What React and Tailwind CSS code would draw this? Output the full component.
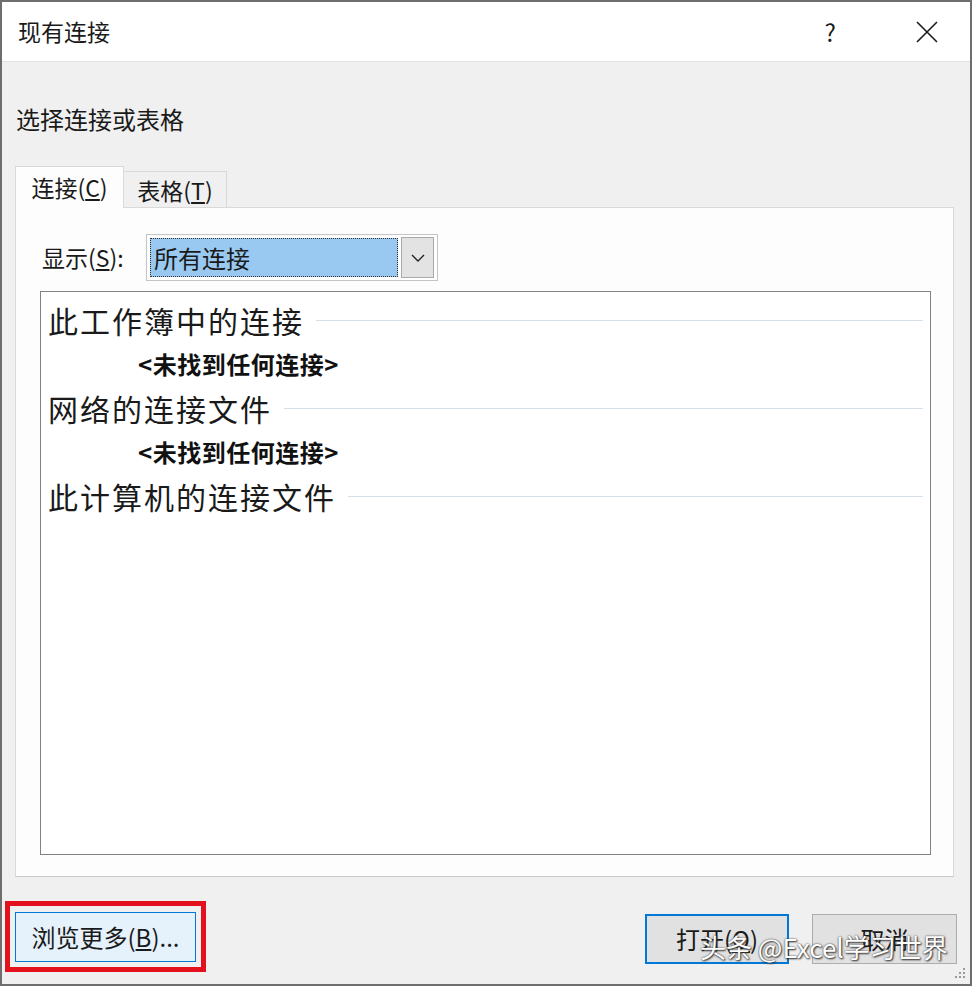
import React from 'react';

const font = { fontFamily: '"Noto Sans CJK SC", "Noto Sans", sans-serif' };

function Heading({ text }) {
  return (
    <div className="flex items-center h-[44px] pl-[7px] pr-[7px]">
      <span className="text-[30px] leading-none tracking-[2px] text-[#1a1a1a] whitespace-nowrap">{text}</span>
      <div className="flex-1 ml-[12px] h-px bg-[#d6dfe8]" />
    </div>
  );
}

function Empty() {
  return (
    <div className="flex items-center h-[44px] pl-[97px]">
      <span className="text-[24px] leading-none font-bold tracking-[0.5px] text-[#111]">&lt;未找到任何连接&gt;</span>
    </div>
  );
}

export default function App() {
  return (
    <div style={font} className="relative w-[972px] h-[986px] flex flex-col border-2 border-[#6e6e6e] bg-[#f0f0f0] text-[#1a1a1a] overflow-hidden">
      {/* title bar */}
      <div className="h-[60px] flex items-center bg-white border-b border-[#e3e3e3] pl-[16px]">
        <span className="text-[23px] leading-none">现有连接</span>
        <span className="ml-auto text-[24px] leading-none mr-[80px]">?</span>
        <svg width="22" height="22" viewBox="0 0 22 22" className="mr-[32px]">
          <path d="M1 1 L21 21 M21 1 L1 21" stroke="#1a1a1a" strokeWidth="1.6" />
        </svg>
      </div>

      {/* body */}
      <div className="flex-1 flex flex-col px-[13px]">
        <div className="mt-[41px] text-[24px] leading-[32px] pl-[1px]">选择连接或表格</div>

        {/* tabs */}
        <div className="mt-[31px] flex items-end">
          <div className="relative z-10 w-[109px] h-[42px] bg-[#fdfdfd] border border-b-0 border-[#d9d9d9] flex items-center justify-center text-[23px] leading-none">
            连接(<span className="underline underline-offset-2">C</span>)
          </div>
          <div className="w-[103px] h-[37px] bg-[#f0f0f0] border border-l-0 border-b-0 border-[#d9d9d9] flex items-center justify-center text-[23px] leading-none">
            表格(<span className="underline underline-offset-2">T</span>)
          </div>
        </div>

        {/* panel */}
        <div className="-mt-px w-[939px] h-[670px] bg-[#fdfdfd] border border-[#d9d9d9] border-b-[#c8c8c8] flex flex-col px-[24px] pt-[26px]">
          <div className="flex items-center h-[47px]">
            <span className="ml-[2px] w-[104px] text-[23px] leading-none">显示(<span className="underline underline-offset-2">S</span>):</span>
            <div className="w-[292px] h-[47px] border border-[#c4c4c4] bg-white flex items-center px-[3px] gap-[3px]">
              <div className="w-[250px] h-[39px] bg-[#99c9f1] border border-dotted border-[#333] flex items-center pl-[3px] text-[24px] leading-none">
                所有连接
              </div>
              <div className="w-[33px] h-[41px] bg-[#e3e3e3] border border-[#a9a9a9] flex items-center justify-center">
                <svg width="14" height="8" viewBox="0 0 14 8">
                  <path d="M1 1 L7 7 L13 1" fill="none" stroke="#222" strokeWidth="1.4" />
                </svg>
              </div>
            </div>
          </div>

          <div className="mt-[10px] w-[891px] h-[564px] bg-white border border-[#828282] pt-[6px]">
            <Heading text="此工作簿中的连接" />
            <Empty />
            <Heading text="网络的连接文件" />
            <Empty />
            <Heading text="此计算机的连接文件" />
          </div>
        </div>
      </div>

      {/* buttons */}
      <div className="h-[104px] flex items-start pl-[3px] pr-[13px]">
        <div className="mt-[21px] border-[5px] border-[#e3101d] p-[5px] pt-[6px]">
          <div className="w-[181px] h-[50px] bg-[#e5f1fb] border border-[#0078d7] flex items-center justify-center text-[24px] leading-none">
            浏览更多(<span className="underline underline-offset-2">B</span>)...
          </div>
        </div>
        <div className="ml-auto mt-[34px] flex gap-[23px]">
          <div className="w-[144px] h-[50px] bg-[#e1e1e1] border-2 border-[#0078d7] flex items-center justify-center text-[24px] leading-none">
            打开(<span className="underline underline-offset-2">O</span>)
          </div>
          <div className="w-[145px] h-[50px] bg-[#e1e1e1] border border-[#adadad] flex items-center justify-center text-[24px] leading-none">
            取消
          </div>
        </div>
      </div>

      {/* watermark */}
      <div className="absolute left-[698px] top-[932px] text-[26px] leading-none text-white whitespace-nowrap [text-shadow:0_0_2px_#333,1px_1px_2px_#333]">
        头条 @Excel学习世界
      </div>

      {/* resize grip */}
      <svg width="14" height="14" viewBox="0 0 14 14" className="absolute right-[3px] bottom-[4px]">
        <rect x="10" y="2" width="2" height="2" fill="#9a9a9a" />
        <rect x="6" y="6" width="2" height="2" fill="#9a9a9a" />
        <rect x="10" y="6" width="2" height="2" fill="#9a9a9a" />
        <rect x="2" y="10" width="2" height="2" fill="#9a9a9a" />
        <rect x="6" y="10" width="2" height="2" fill="#9a9a9a" />
        <rect x="10" y="10" width="2" height="2" fill="#9a9a9a" />
      </svg>
    </div>
  );
}
